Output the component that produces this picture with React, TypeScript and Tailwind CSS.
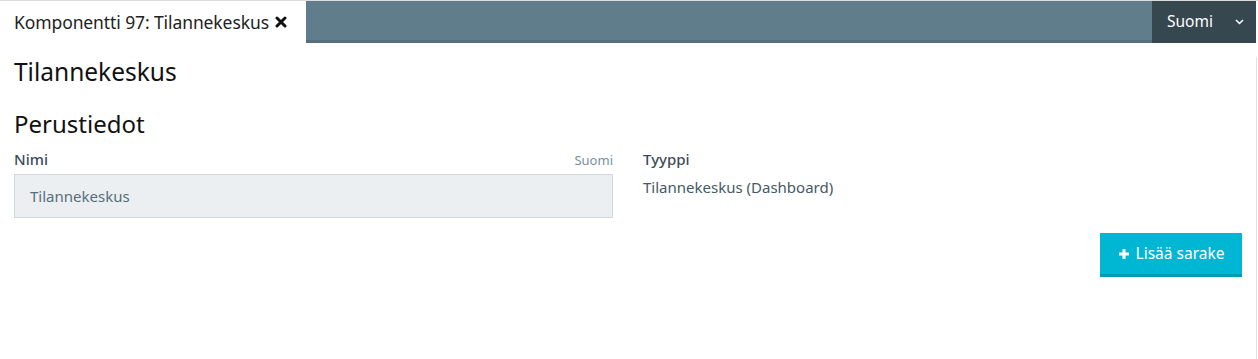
const App = () => {
  return (
    <div
      className="w-[1258px] h-[359px] bg-white overflow-hidden"
      style={{ fontFamily: "'Noto Sans', 'Open Sans', sans-serif" }}
    >
      <div className="border-t border-[#dcdcdc] flex h-[43px]">
        <div className="w-[306px] flex items-center pl-[14px] gap-[6px] bg-white">
          <span className="text-[17.5px] text-[#222] tracking-[-0.1px]">Komponentti 97: Tilannekeskus</span>
          <svg width="12" height="12" viewBox="0 0 12 12">
            <path d="M2 2 L10 10 M10 2 L2 10" stroke="#111" strokeWidth="3" strokeLinecap="round" />
          </svg>
        </div>
        <div className="flex-1 bg-[#607d8b] border-b-[3px] border-[#55707c]" />
        <div className="w-[104px] bg-[#37474f] flex items-center justify-between pl-[15px] pr-[12px]">
          <span className="text-white text-[15.5px]">Suomi</span>
          <svg width="9" height="6" viewBox="0 0 9 6">
            <path d="M1 1 L4.5 4.5 L8 1" stroke="#fff" strokeWidth="1.5" fill="none" />
          </svg>
        </div>
        <div className="w-[2px] bg-white" />
      </div>
      <div className="w-[1257px] h-[316px] border-r border-[#e2e2e2] px-[14px]">
        <h1 className="text-[24.5px] text-[#111] mt-[14px] leading-[30px]">Tilannekeskus</h1>
        <h2 className="text-[24px] text-[#111] mt-[22px] leading-[30px]">Perustiedot</h2>
        <div className="grid grid-cols-2 gap-[30px] mt-[9px]">
          <div>
            <div className="flex justify-between items-end h-[22px]">
              <span className="text-[15px] font-medium text-[#3c4c57]">Nimi</span>
              <span className="text-[13px] text-[#78909c]">Suomi</span>
            </div>
            <div className="mt-[4px] h-[44px] bg-[#eceff1] border border-[#cfd8dc] flex items-center pl-[15px] text-[15px] text-[#546e7a]">
              Tilannekeskus
            </div>
          </div>
          <div>
            <div className="h-[22px] flex items-end">
              <span className="text-[15px] font-medium text-[#3c4c57]">Tyyppi</span>
            </div>
            <div className="mt-[6px] text-[15px] text-[#455a64]">Tilannekeskus (Dashboard)</div>
          </div>
        </div>
        <div className="flex justify-end mt-[15px]">
          <button className="h-[44px] w-[142px] bg-[#00b7d3] border-b-[3px] border-[#009db5] text-white text-[15.5px] flex items-center justify-center gap-[6px]">
            <svg width="12" height="12" viewBox="0 0 12 12">
              <path d="M6 1 V11 M1 6 H11" stroke="#fff" strokeWidth="3" />
            </svg>
            Lisää sarake
          </button>
        </div>
      </div>
    </div>
  );
};

export default App;
